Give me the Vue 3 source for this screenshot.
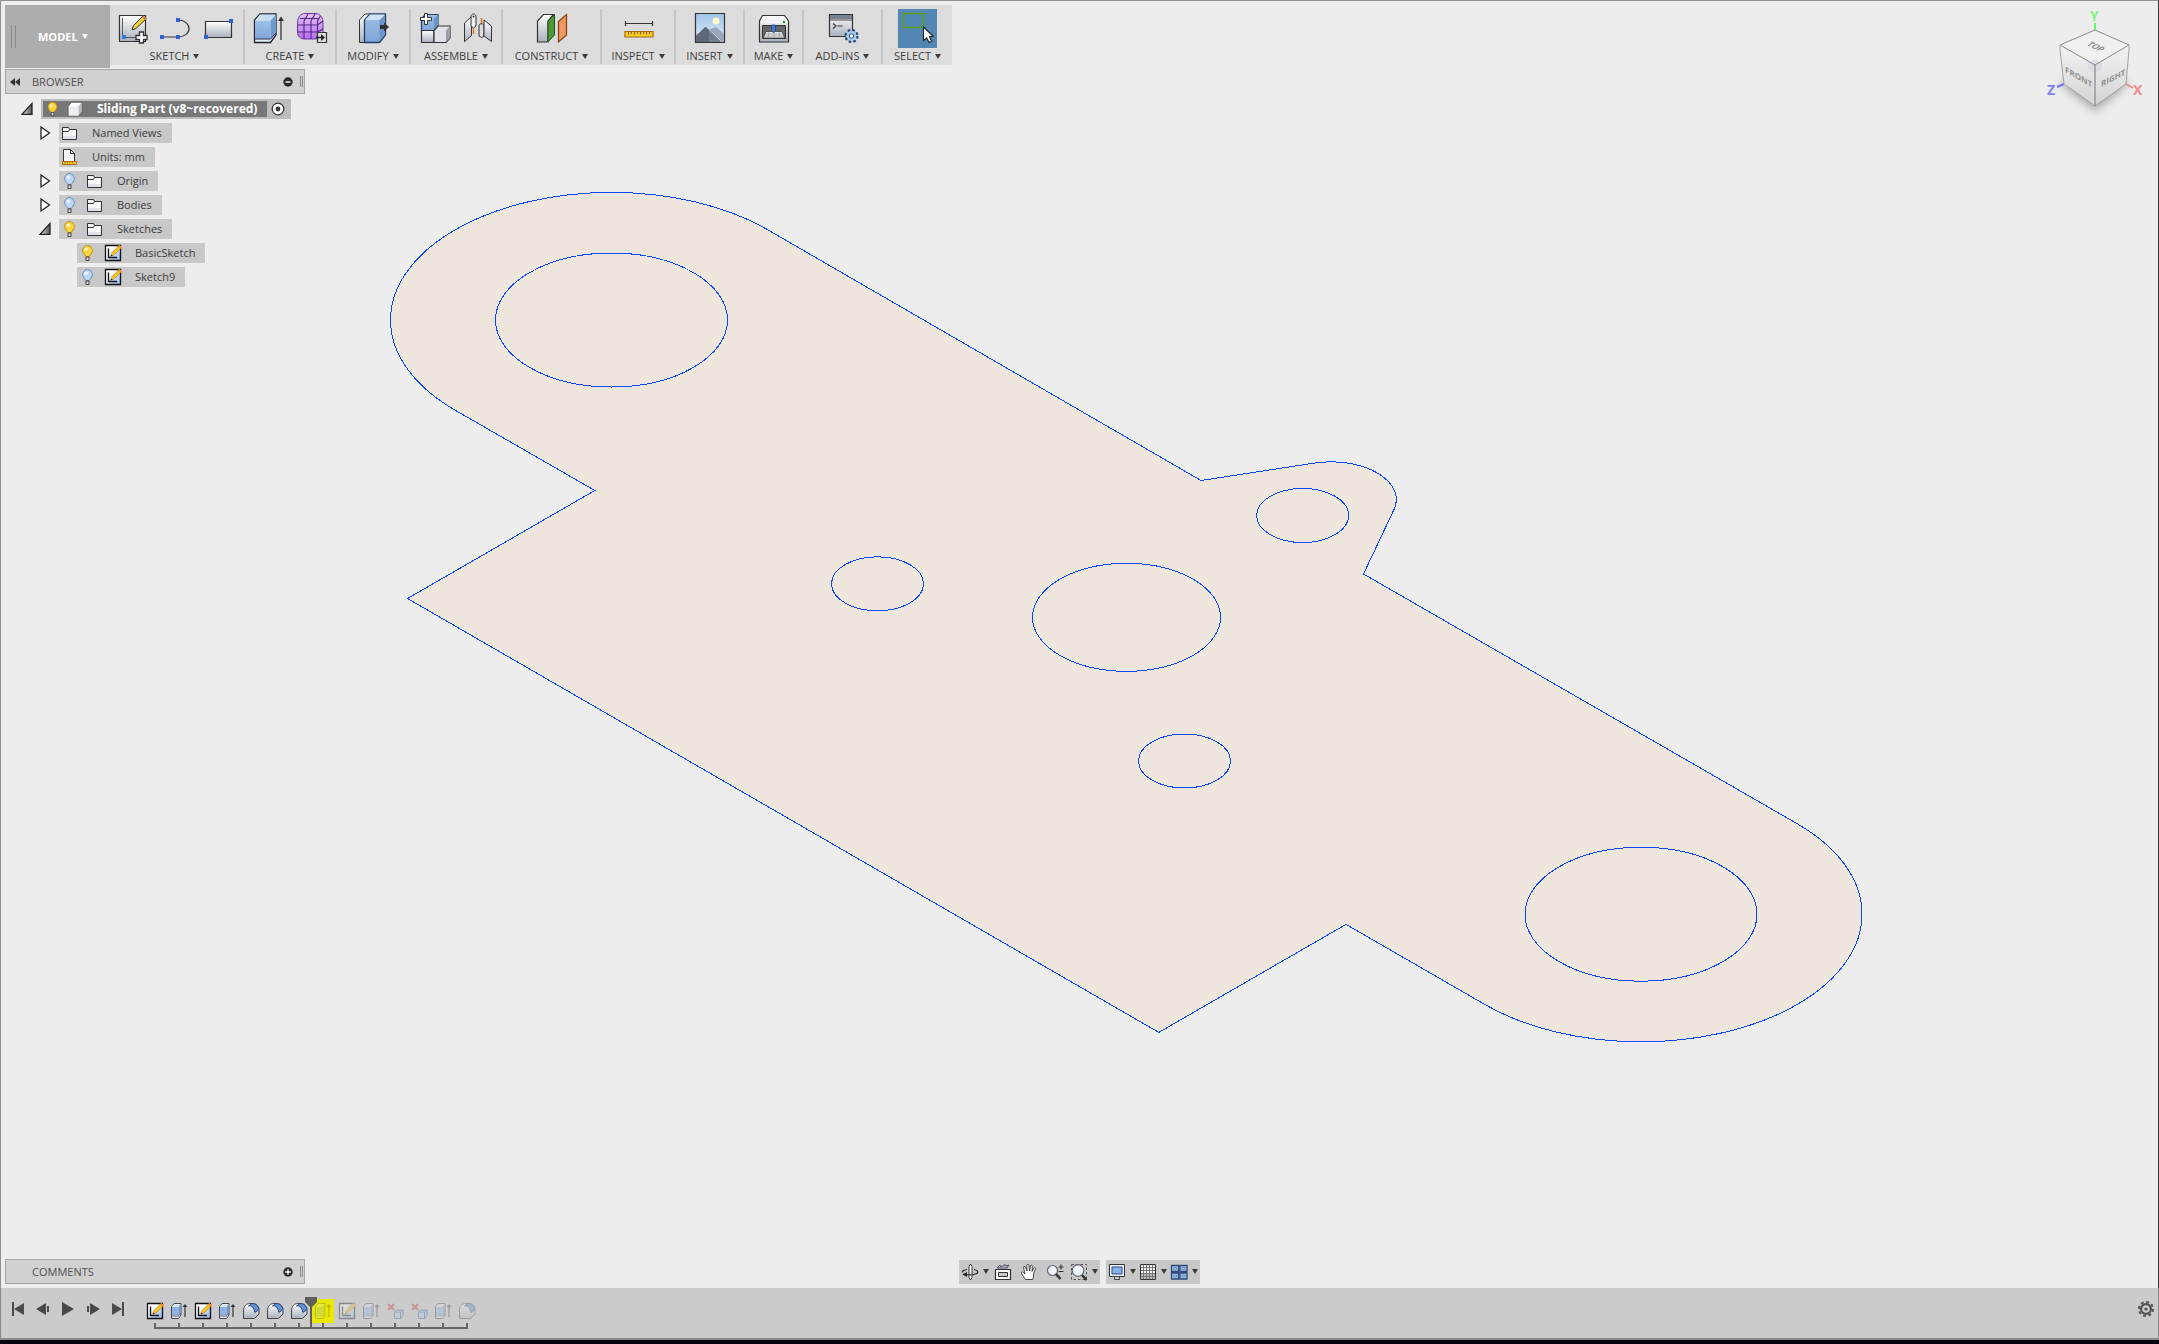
<template>
  <div class="app">
    <main class="viewport">
      <svg class="canvas" viewBox="1 1 2157 1287" aria-hidden="true">
        <defs>
          <linearGradient id="steel" x1="0" y1="0" x2="0" y2="1">
            <stop offset="0" stop-color="#ffffff" />
            <stop offset="1" stop-color="#a9b0bd" />
          </linearGradient>
          <linearGradient id="blue" x1="0" y1="0" x2="0" y2="1">
            <stop offset="0" stop-color="#9fc0e6" />
            <stop offset="1" stop-color="#7da6d6" />
          </linearGradient>
          <linearGradient id="purple" x1="0" y1="0" x2="0" y2="1">
            <stop offset="0" stop-color="#e3c4fb" />
            <stop offset="1" stop-color="#b56cf0" />
          </linearGradient>
          <linearGradient id="paper" x1="0" y1="0" x2="1" y2="1">
            <stop offset="0.3" stop-color="#ffffff" />
            <stop offset="1" stop-color="#7fa9e6" />
          </linearGradient>
          <linearGradient id="sky" x1="0" y1="0" x2="0" y2="1">
            <stop offset="0" stop-color="#9fc3ea" />
            <stop offset="1" stop-color="#e4eef8" />
          </linearGradient>
          <linearGradient id="dark" x1="0" y1="0" x2="1" y2="0">
            <stop offset="0" stop-color="#eeeeee" />
            <stop offset="1" stop-color="#555555" />
          </linearGradient>
        </defs>
        <g class="sketch">
          <path :d="outline" />
          <ellipse v-for="(h, i) in holes" :key="i" :cx="h[0]" :cy="h[1]" :rx="h[2]" :ry="h[3]" />
        </g>
      </svg>

      <nav class="toolbar">
        <button class="workspace" type="button">
          <span class="grip"></span>
          MODEL
          <svg class="caret" viewBox="0 0 6 5"><path d="M0 0h6L3 5z" /></svg>
        </button>
        <div v-for="g in groups" :key="g.label" class="group">
          <div class="group-icons">
            <button v-for="icon in g.icons" :key="icon" type="button" class="tool" :class="{ active: icon === 'select' }" :aria-label="icon">
              <svg viewBox="0 0 32 32" v-html="icons[icon]"></svg>
            </button>
          </div>
          <button type="button" class="group-label">
            {{ g.label }}<svg class="caret" viewBox="0 0 6 5"><path d="M0 0h6L3 5z" /></svg>
          </button>
        </div>
      </nav>

      <section class="browser">
        <header class="panel-head">
          <button type="button" class="collapse" aria-label="Collapse">
            <svg viewBox="0 0 10 8"><path d="M5 0v8L0 4zM10 0v8L5 4z" fill="#333" /></svg>
          </button>
          <h2>BROWSER</h2>
          <button type="button" class="toggle" aria-label="Hide">
            <svg viewBox="0 0 10 10"><circle cx="5" cy="5" r="4.7" fill="#2b2b2b" /><path d="M2.5 5h5" stroke="#fff" stroke-width="1.4" /></svg>
          </button>
          <span class="grip small"></span>
        </header>
        <ul class="tree">
          <li v-for="row in tree" :key="row.label" class="row" :class="['level' + row.level, { root: row.level === 0 }]">
            <button v-if="row.arrow" type="button" class="arrow" :aria-label="row.arrow">
              <svg viewBox="0 0 12 14" v-html="icons[row.arrow]"></svg>
            </button>
            <span v-else class="arrow"></span>
            <div class="node">
              <div class="node-body">
                <svg v-for="icon in row.icons" :key="icon" class="node-icon" viewBox="0 0 20 20" v-html="icons[icon]"></svg>
                <span class="node-text">{{ row.label }}</span>
              </div>
              <svg v-if="row.level === 0" class="radio" viewBox="0 0 14 14">
                <circle cx="7" cy="7" r="5.8" fill="#fff" stroke="#333" stroke-width="1.2" />
                <circle cx="7" cy="7" r="2.4" fill="#333" />
              </svg>
            </div>
          </li>
        </ul>
      </section>

      <div class="bottom">
        <header class="panel-head">
          <span class="collapse"></span>
          <h2>COMMENTS</h2>
          <button type="button" class="toggle" aria-label="Show comments">
            <svg viewBox="0 0 10 10"><circle cx="5" cy="5" r="4.7" fill="#2b2b2b" /><path d="M2.3 5h5.4M5 2.3v5.4" stroke="#fff" stroke-width="1.3" /></svg>
          </button>
          <span class="grip small"></span>
        </header>
        <div class="nav-bar">
          <div v-for="(set, i) in navSets" :key="i" class="nav-set">
            <button v-for="n in set" :key="n.icon" type="button" :class="{ menu: n.menu }" :aria-label="n.icon">
              <svg class="nav-icon" viewBox="0 0 18 18" v-html="icons[n.icon]"></svg>
              <svg v-if="n.menu" class="caret" viewBox="0 0 6 5"><path d="M0 0h6L3 5z" /></svg>
            </button>
          </div>
        </div>
      </div>

      <svg class="cube" viewBox="-1 0 129 120">
        <defs>
          <filter id="soft" x="-50%" y="-50%" width="200%" height="200%"><feGaussianBlur stdDeviation="5" /></filter>
          <linearGradient id="face" x1="0" y1="0" x2="0" y2="1">
            <stop offset="0" stop-color="#f2f2f2" />
            <stop offset="1" stop-color="#d4d4d4" />
          </linearGradient>
        </defs>
        <path d="M30 82L65 68L99 82L65 110z" fill="#8a8a8a" opacity="0.75" filter="url(#soft)" />
        <path d="M34 83l-7 3" stroke="#7272f0" stroke-width="2" />
        <path d="M96 83l7 4" stroke="#f58b8b" stroke-width="2" />
        <path d="M65 29v-7" stroke="#6cf56c" stroke-width="2" />
        <path d="M30 44L65 64V105L34 83z" fill="url(#face)" />
        <path d="M99 44L65 64V105L96 83z" fill="url(#face)" />
        <path d="M65 29L99 44L65 64L30 44z" fill="#f0f0f0" />
        <path d="M65 58l7 4v6l-7 4l-7-4v-6z" fill="#c3cbe0" opacity="0.4" />
        <g fill="none" stroke="#8c8c8c" stroke-width="1">
          <path d="M65 29L99 44L65 64L30 44z" />
          <path d="M30 44v5l4 34L65 105L96 83l3-34v-5" stroke="#a2a2a2" />
          <path d="M65 64v41" stroke="#777" />
        </g>
        <g class="face-text">
          <text transform="translate(35 71) skewY(30)">FRONT</text>
          <text transform="translate(71 86) skewY(-27)">RIGHT</text>
          <text transform="translate(56 44) rotate(26) skewX(-30)">TOP</text>
        </g>
        <text class="axis" x="60" y="20" fill="#7df57d">Y</text>
        <text class="axis" x="17" y="94" fill="#8080f5">Z</text>
        <text class="axis" x="103" y="94" fill="#f58b8b">X</text>
      </svg>
    </main>

    <footer class="timeline">
      <div class="player">
        <button v-for="p in player" :key="p" type="button" :aria-label="p">
          <svg viewBox="0 0 14 14" v-html="icons[p]"></svg>
        </button>
      </div>
      <ol class="features">
        <li v-for="(f, i) in features" :key="i" :class="{ rolled: i > 6, current: i === 7 }">
          <svg class="feature" viewBox="0 0 18 18" v-html="icons[f]"></svg>
        </li>
        <li class="marker-slot">
          <svg class="marker" viewBox="0 0 12 32"><path d="M0 0h12v5L7 10v22H5V10L0 5z" fill="#5f5f5f" /></svg>
        </li>
      </ol>
      <button type="button" class="settings" aria-label="Settings">
        <svg viewBox="0 0 16 16">
          <circle cx="8" cy="8" r="7" fill="none" stroke="#505050" stroke-width="2" stroke-dasharray="2.9 2.6" />
          <circle cx="8" cy="8" r="4.9" fill="none" stroke="#505050" stroke-width="2.2" />
          <circle cx="8" cy="8" r="1.6" fill="#505050" />
        </svg>
      </button>
    </footer>
  </div>
</template>

<script setup>
// plate outline, arcs are circles seen in isometric view
const outline =
  'M767.8 229.8L1201 480.5L1315 463A65.2 37.8 0 0 1 1393.3 511L1363.5 574L1797.3 823.8' +
  'A221 127.6 0 0 1 1862 914.2A221 127.6 0 0 1 1641 1041.8A221 127.6 0 0 1 1484.7 1004.4' +
  'L1346 924.4L1158.8 1032.4L407.5 598.5L594.8 490.5L455.2 410.2' +
  'A221 127.6 0 0 1 390.5 320A221 127.6 0 0 1 611.5 192.4A221 127.6 0 0 1 767.8 229.8z'

const holes = [
  [611.5, 320, 116, 67],
  [1641, 914.2, 116, 67],
  [1126.5, 617.3, 94, 54],
  [1302.7, 515.5, 46, 27],
  [1184.5, 761, 46, 27],
  [877.5, 583.8, 46, 27]
]

const groups = [
  { label: 'SKETCH', icons: ['sketch', 'line', 'rect'] },
  { label: 'CREATE', icons: ['extrude', 'form'] },
  { label: 'MODIFY', icons: ['press'] },
  { label: 'ASSEMBLE', icons: ['component', 'joint'] },
  { label: 'CONSTRUCT', icons: ['plane'] },
  { label: 'INSPECT', icons: ['measure'] },
  { label: 'INSERT', icons: ['picture'] },
  { label: 'MAKE', icons: ['printer'] },
  { label: 'ADD-INS', icons: ['script'] },
  { label: 'SELECT', icons: ['select'] }
]

const tree = [
  { label: 'Sliding Part (v8~recovered)', level: 0, arrow: 'open', icons: ['bulbOn', 'body'] },
  { label: 'Named Views', level: 1, arrow: 'closed', icons: ['folder'] },
  { label: 'Units: mm', level: 1, icons: ['units'] },
  { label: 'Origin', level: 1, arrow: 'closed', icons: ['bulbOff', 'folder'] },
  { label: 'Bodies', level: 1, arrow: 'closed', icons: ['bulbOff', 'folder'] },
  { label: 'Sketches', level: 1, arrow: 'open', icons: ['bulbOn', 'folder'] },
  { label: 'BasicSketch', level: 2, icons: ['bulbOn', 'sketchItem'] },
  { label: 'Sketch9', level: 2, icons: ['bulbOff', 'sketchItem'] }
]

const navSets = [
  [{ icon: 'orbit', menu: true }, { icon: 'look' }, { icon: 'pan' }, { icon: 'zoom' }, { icon: 'fit', menu: true }],
  [{ icon: 'display', menu: true }, { icon: 'grid', menu: true }, { icon: 'views', menu: true }]
]

const player = ['first', 'prev', 'play', 'next', 'last']

const features = [
  'fSketch', 'fExtrude', 'fSketch', 'fExtrude', 'fFillet', 'fFillet', 'fFillet',
  'fExtrude', 'fSketch', 'fExtrude', 'fRemove', 'fRemove', 'fExtrude', 'fFillet'
]

const dot = (x, y) => `<path d="M${x - 2} ${y - 2}h4v4h-4z" fill="#2f63cf"/>`

const bulb = (fill, edge) =>
  `<path d="M10.500 2.500a5 5 0 0 0-3.400 8.600C8.200 12.200 8.500 13 8.500 13.500h4c0-.5.3-1.300 1.400-2.400A5 5 0 0 0 10.500 2.500z" fill="${fill}" stroke="${edge}"/>` +
  '<path d="M9 14h3v3.500H9z" fill="#ddd" stroke="#444"/><circle cx="9.200" cy="6.300" r="1.700" fill="#fff" opacity=".8"/>'

const sketchSmall =
  '<path d="M1.500 1.500h15v15h-15z" fill="url(#paper)" stroke="#111" stroke-width="1.300"/>' +
  '<path d="M4.500 4.500v9H13" fill="none" stroke="#111" stroke-width="1.300"/>' +
  '<path d="M7 12l1-3.200L15 1.500l2.300 2L10 11z" fill="#f7c21a" stroke="#b9861a" stroke-width=".6"/>' +
  '<path d="M14 2.500l1.500-1.500 2.300 2-1.600 1.700z" fill="#f19327"/><path d="M6.500 12.500l1-2 1.200 1.200z" fill="#222"/>'

const icons = {
  sketch:
    '<path d="M3.500 3.500h26v26h-26z" fill="url(#steel)" stroke="#333" stroke-width="1.200"/>' +
    '<path d="M6.500 6v18M10 25.500h14" stroke="#555"/><path d="M6 23h4v4h-4z" fill="#2f7fd6"/>' +
    '<path d="M16 18l1.500-4.500L27 4l3 3L20 16.500z" fill="#f8cf3a" stroke="#333"/><path d="M26 5l1.500-1.500 3 3L29 8z" fill="#c9853c"/>' +
    '<path d="M23.500 20h4v3.500H31v4h-3.500V31h-4v-3.500H20v-4h3.500z" fill="#fff" stroke="#333" stroke-width="1.300"/>',
  line:
    '<path d="M3 25h16c6 0 11-3.500 11-8.500S25 8 19 8" fill="none" stroke="#333" stroke-width="1.200"/>' + dot(3, 25) + dot(19, 25) + dot(19, 8),
  rect:
    '<path d="M3.500 9.500h26v16h-26z" fill="url(#steel)" stroke="#333" stroke-width="1.200"/>' + dot(4, 25) + dot(29, 9),
  extrude:
    '<path d="M1.500 8L7 2h16v21l-5.500 7.500h-16z" fill="#e4ecf6" stroke="#223" stroke-width="1.300"/>' +
    '<path d="M2 8.500h15.500V27H2z" fill="url(#blue)"/><path d="M17.500 8.500L23 2.500V21l-5.500 6z" fill="#6f98cc"/><path d="M2 8.500L7 2.500h15.500l-5 6z" fill="#c9def3"/>' +
    '<path d="M2 27h15.500L23 21" fill="none" stroke="#335"/><path d="M28 28V6" stroke="#333" stroke-width="1.300"/><path d="M25 9l3-4.500L31 9z" fill="#333"/>',
  form:
    '<path d="M1.500 12C1.500 4 5 1.500 9 1.500h10c6 0 8 5 8 9V20c0 5-4 7-9 7H9c-5 0-7.500-3-7.500-7z" fill="url(#purple)" stroke="#6a3a9a"/>' +
    '<path d="M1.500 13h20l5.500-4M1.500 20h20l5.500-3M4 6.500h19M8 27V9l4-7M15 27V9l4-7M21.500 26V9l3-5" fill="none" stroke="#53257f" stroke-width="1.100"/>' +
    '<path d="M21.500 20.500h9v10h-9z" fill="#ddd" stroke="#333" stroke-width="1.200"/><path d="M20 25.500h6" stroke="#222" stroke-width="1.600"/><path d="M25 22l4 3.500-4 3.500z" fill="#222"/>',
  press:
    '<path d="M1.500 8L7 2h5L7.500 8v22.500h-6z" fill="url(#steel)" stroke="#333"/>' +
    '<path d="M6.500 8L12 2h15.500v21l-6 7.500h-15z" fill="url(#blue)" stroke="#223c66" stroke-width="1.300"/>' +
    '<path d="M7 8l5-5.500h15L21.500 8z" fill="#cfe2f6"/><path d="M21.500 8.500L27 3v19.500l-5.500 7z" fill="#6d97cc"/>' +
    '<path d="M22 13h4V10.500l5 4.500-5 4.500V17h-4z" fill="#333"/>',
  component:
    '<path d="M2.500 7L6 2.500h13V15l-2 3.500H2.500z" fill="url(#blue)" stroke="#223c66" stroke-width="1.200"/><path d="M15 6.500l4-4v12l-4 3.500z" fill="#6d97cc"/>' +
    '<path d="M2.500 18.500h12.500v12H2.500z" fill="url(#steel)" stroke="#333" stroke-width="1.200"/><path d="M15 18.500l4-4.500h12v12l-4 4.500H15z" fill="#dfe2e8" stroke="#333" stroke-width="1.200"/>' +
    '<path d="M27 18.500V30l4-4V14z" fill="#9a9faa"/><path d="M5.500 1.500h3v4h4v3h-4v4h-3v-4h-4v-3h4z" fill="#fff" stroke="#333"/>',
  joint:
    '<path d="M2.500 11l7-6.500v19l-7 6z" fill="url(#steel)" stroke="#333"/><path d="M9 5c0-4 5-4 5 0v9l-2.500 2L9 14z" fill="#eee" stroke="#333"/><circle cx="11.500" cy="4.500" r="1" fill="#333"/>' +
    '<path d="M11.500 16v6M19.500 6v7" stroke="#e87516" stroke-width="1.500"/><path d="M17 14c0-3 5-3 5 0v10l-2.500 1.500L17 24z" fill="#ddd" stroke="#333"/><path d="M22 8l7.500 6v15.500L22 24z" fill="url(#steel)" stroke="#333"/>',
  plane:
    '<path d="M1.500 9L7.500 2.500h10L12 9v21H1.500z" fill="url(#steel)" stroke="#333" stroke-width="1.200"/><path d="M12 9l6.500-6.500V23L12 30z" fill="#4b9a35" stroke="#24501a"/>' +
    '<path d="M22.500 9.500l8-7V23l-8 7z" fill="#ee9a60" stroke="#8a3d10" stroke-width="1.200"/>',
  measure:
    '<path d="M2 11.500h28M2.500 9v5M29.500 9v5" stroke="#333" stroke-width="1.200"/><path d="M2 19.500h28v5.500H2z" fill="#f6cc28" stroke="#a86a12" stroke-width="1.200"/>' +
    '<path d="M5.500 20v2.500M8.500 20v2M11.500 20v2.500M14.500 20v2M17.500 20v2.500M20.500 20v2M23.500 20v2.500M26.500 20v2" stroke="#8a5a10"/>',
  picture:
    '<path d="M1.500 1.500h29v29h-29z" fill="url(#sky)" stroke="#333" stroke-width="1.200"/><circle cx="22" cy="9" r="3.500" fill="#fffbd0"/>' +
    '<path d="M2 22l15-5 5-2 8 7v8H2z" fill="#9aa7bd"/><path d="M2 24l9-9 3 1 14 14H2z" fill="#5f6878"/><path d="M15 17l14 13H15z" fill="#747e8f"/><path d="M13 15.500L28 30" stroke="#fff" stroke-width=".7"/>',
  printer:
    '<path d="M4.500 3.500h22l4 5.500v21h-29V9z" fill="url(#steel)" stroke="#333" stroke-width="1.200"/><path d="M3 10h26" stroke="#fff"/>' +
    '<circle cx="26" cy="10" r="1.200" fill="#1a9a1a"/><path d="M4.500 13.500h23v13h-23z" fill="#666" stroke="#333"/><path d="M8 19.500h16l2.500 6.500h-21z" fill="#e8e8e8" stroke="#333" stroke-width=".7"/>' +
    '<path d="M7 22h18M6 24h20M11 20l-1 6M16 20v6M21 20l1 6" stroke="#999" stroke-width=".7"/><path d="M13.500 13h4v5l-2 3-2-3z" fill="#3c7ad8" stroke="#1c3c80" stroke-width=".7"/>',
  script:
    '<path d="M2.500 2.500h23v22h-23z" fill="url(#steel)" stroke="#333" stroke-width="1.200"/><path d="M3 3h22v4H3z" fill="#77818f"/><path d="M3 8h22" stroke="#444"/>' +
    '<path d="M6 11.500l3 2.500-3 2.500M10.500 14h5" fill="none" stroke="#333" stroke-width="1.200"/>' +
    '<circle cx="24.500" cy="24" r="5.800" fill="#a9cbf0" stroke="#2c4a78" stroke-width="2.600" stroke-dasharray="2.600 1.960"/><circle cx="24.500" cy="24" r="4.900" fill="#a9cbf0"/><circle cx="24.500" cy="24" r="2.200" fill="#fff" stroke="#2c4a78"/>',
  select:
    '<path d="M1.500 1.500h20v14h-20z" fill="none" stroke="#5aa016" stroke-width="1.500"/>' +
    '<path d="M21.500 15v13.500l3.200-2.600 2.400 4.600 2.600-1.300-2.200-4.500 3.700-.4z" fill="#fff" stroke="#222" stroke-width="1.100"/>',
  open: '<path d="M11 1.500v10.800H1z" fill="url(#dark)" stroke="#222" stroke-width="1.300"/>',
  closed: '<path d="M2 1v12l8.500-6z" fill="#fff" stroke="#222" stroke-width="1.300"/>',
  bulbOn: bulb('#fbd63a', '#c98a12'),
  bulbOff: bulb('#bcd6f7', '#6e8cba'),
  body: '<path d="M2.500 7L6 2.500h11.500v10L14 17.500H2.500z" fill="#fff" stroke="#555"/><path d="M3 7h11v10.500H3z" fill="#eceef2"/><path d="M14 7l3.500-4.500v10L14 17z" fill="#b7bbc4"/>',
  folder: '<path d="M3.500 4.500h6l1 2h7v10h-14z" fill="#f6f7fa" stroke="#333"/><path d="M3.500 8.500h6l1-2" fill="none" stroke="#333"/><path d="M4 13h13v3H4z" fill="#dfe2e8"/>',
  units: '<path d="M4.500 2.500h7l4 4v9h-11z" fill="#f4f5f8" stroke="#333"/><path d="M11.500 2.500v4h4" fill="none" stroke="#333"/><path d="M3.500 14.500h14v3h-14z" fill="#f6cc28" stroke="#a86a12"/><path d="M6 15v1.500M8.500 15v1.500M11 15v1.500M13.500 15v1.500" stroke="#8a5a10" stroke-width=".8"/>',
  sketchItem: `<g transform="translate(2 1)">${sketchSmall}</g>`,
  orbit: '<path d="M8 3.500L9.500 1 11 3.500v11L9.500 17 8 14.500z" fill="#fff" stroke="#333"/><path d="M13 6.500c5 1 5 4 0 5-4 .8-8 .4-11-.5M6 6.500C3 7 1 8 1.500 9.500" fill="none" stroke="#333" stroke-width="1.200"/><path d="M6 9v5l-4.500-2.500z" fill="#222"/>',
  look: '<path d="M1.500 6.500h15v10h-15z" fill="#fff" stroke="#333" stroke-width="1.200"/><path d="M4.500 9.500h9v4h-9z" fill="#c8c8d2" stroke="#333"/><path d="M3 5l3-3 1 2 4-2.500 1 1.500 3-1-2 3z" fill="#aab4bf" stroke="#556"/>',
  pan: '<path d="M5.500 16.500L1.500 10.500c-.8-1.500 1-2 2-1L5 11 3.500 4.500c-.2-1.300 1.500-1.600 1.900-.3L7 8 6.800 2.500c0-1.500 2-1.500 2.200 0L9.500 8l1-5c.3-1.400 2.100-1 1.900.4L12 8.500l1.800-3.300c.7-1.200 2.200-.4 1.700.8L13.500 11v3l-1 2.500z" fill="#fff" stroke="#333" stroke-width=".9"/>',
  zoom: '<circle cx="6.500" cy="7.500" r="5" fill="#eef6fc" stroke="#667" stroke-width="1.200"/><path d="M10 11l4.500 5" stroke="#333" stroke-width="2.600"/><path d="M12.500 4h5M15 1.500v5M12.500 8.500h5" stroke="#333" stroke-width="1.200"/>',
  fit: '<path d="M1.500 1.500h15v15h-15z" fill="none" stroke="#555" stroke-dasharray="2.500 2"/><circle cx="8" cy="7.500" r="5.800" fill="#eef6fc" stroke="#667" stroke-width="1.200"/><path d="M12 12l4.500 5" stroke="#333" stroke-width="2.600"/>',
  display: '<path d="M1.500 1.500h15v12h-15z" fill="#eef2f8" stroke="#333"/><path d="M4 4h10v7H4z" fill="#86b2e8" stroke="#2c4a88"/><path d="M6.500 13.500h5v3h-5z" fill="#ccc" stroke="#444"/>',
  grid: '<path d="M1.500 1.500h15v15h-15z" fill="#f4f4f4" stroke="#333"/><path d="M2 10h14v6H2z" fill="#bcbcbc"/><path d="M4.500 2v14M7.500 2v14M10.500 2v14M13.500 2v14M2 4.500h14M2 7.500h14M2 10.500h14M2 13.500h14" stroke="#777"/>',
  views: '<g fill="#a6c6ec" stroke="#2c4a78" stroke-width="1.300"><path d="M1.500 2.500h7v6h-7zM10 2.500h7v6h-7zM1.500 10h7v6h-7zM10 10h7v6h-7z"/></g><path d="M3.500 4.500h3v2h-3zM12 4.500h3v2h-3zM3.500 12h3v2h-3zM12 12h3v2h-3z" fill="none" stroke="#5f88bd" stroke-width=".8"/>',
  first: '<path d="M1 0h2v14H1zM13 1v12L3 7z" fill="#4a4a4a"/>',
  prev: '<path d="M10 1v12L0 7zM11 4h2v6h-2z" fill="#4a4a4a"/>',
  play: '<path d="M1 0v14l12-7z" fill="#4a4a4a"/>',
  next: '<path d="M4 1v12l10-6zM1 4h2v6H1z" fill="#4a4a4a"/>',
  last: '<path d="M11 0h2v14h-2zM1 1v12l10-6z" fill="#4a4a4a"/>',
  fSketch: sketchSmall,
  fExtrude:
    '<path d="M1.500 4.500L4 1.500h7V13l-2.500 3.500h-7z" fill="#e2e9f3" stroke="#445"/><path d="M2 5h6.500v8.500H2z" fill="#8db4e2"/><path d="M8.500 5l2-3v9l-2 3z" fill="#6d97cc"/><path d="M2 14h6.500l2-2.500" fill="none" stroke="#556" stroke-width=".8"/>' +
    '<path d="M15 15V4" stroke="#333" stroke-width="1.200"/><path d="M12.500 5L15 2l2.500 3z" fill="#333"/>',
  fFillet:
    '<path d="M1.500 9c0-5 3-7.500 6-7.500h3c4 0 6.500 3 6.500 7V12l-4.500 4.500h-11z" fill="url(#steel)" stroke="#444"/>' +
    '<path d="M6.500 4c3-1 6 2 6.300 6.500l4.200-3C16.500 4 14 1.500 10 1.500z" fill="#5f93d6" stroke="#28477c"/>',
  fRemove:
    '<path d="M2 2l6 6M8 2L2 8" stroke="#c23030" stroke-width="2"/><path d="M8.500 10l2.500-2h6v6l-2.500 2.500h-6z" fill="#a9cbf0" stroke="#345f96"/><path d="M8.500 10h6v6.500M14.500 10L17 8" fill="none" stroke="#345f96"/>'
}
</script>

<style>
body {
  margin: 0;
  background: #06040f;
}
</style>

<style scoped>
.app {
  display: flex;
  flex-direction: column;
  box-sizing: border-box;
  height: 100vh;
  border-bottom: 4px solid #06040f;
  font-family: "Open Sans", "Noto Sans", sans-serif;
  font-size: 11px;
  color: #3c3c3c;
}
button {
  padding: 0;
  border: 0;
  background: none;
  color: inherit;
  font: inherit;
}
svg {
  display: block;
  flex: none;
}
h2, ul, ol {
  margin: 0;
  padding: 0;
  list-style: none;
}
.viewport {
  position: relative;
  display: flex;
  flex-direction: column;
  flex: 1;
  box-sizing: border-box;
  padding: 4px;
  border: 1px solid #909090;
  border-right-color: #333;
  border-bottom: 0;
  background: #ededed;
}
.canvas {
  position: absolute;
  inset: 0;
  width: 100%;
  height: 100%;
}
.sketch {
  fill: #eee6dc;
  stroke: #0a48ff;
  stroke-width: 1px;
  shape-rendering: crispEdges;
}
.toolbar,
.browser,
.bottom {
  position: relative;
}
.toolbar {
  display: grid;
  grid-template-columns: 105px 135px 92px 74px 92px 99px 74px 69px 59px 79px 69px;
  align-self: flex-start;
  height: 60px;
  background: #dcdcdc;
}
.workspace {
  display: flex;
  align-items: center;
  padding-left: 6px;
  background: #adadad;
  color: #fff;
  font-weight: bold;
}
.grip {
  width: 3px;
  height: 23px;
  margin-right: 22px;
  border: solid #8a8a8a;
  border-width: 0 1px;
}
.caret {
  width: 6px;
  height: 5px;
  margin-left: 4px;
  fill: currentColor;
}
.group {
  display: flex;
  flex-direction: column;
  align-items: center;
  margin: 4px 0;
  border-right: 2px solid #c6c6c6;
}
.group:nth-child(2) {
  padding-right: 4px;
}
.group:last-child {
  border-right: 0;
}
.group-icons {
  display: flex;
  gap: 4px;
}
.tool {
  padding: 3px 4px 4px;
  width: 39px;
  height: 39px;
}
.tool svg {
  width: 32px;
  height: 32px;
}
.tool.active {
  background: #5387b3;
}
.group-label {
  display: flex;
  align-items: center;
  height: 16px;
  line-height: 16px;
  white-space: nowrap;
}
.browser {
  margin-top: 4px;
  flex: 1;
}
.panel-head {
  display: flex;
  align-items: center;
  box-sizing: border-box;
  width: 300px;
  height: 25px;
  padding: 0 1px 0 4px;
  border: 1px solid #a6a6a6;
  background: #d1d1d1;
}
.panel-head h2 {
  flex: 1;
  font-size: 11px;
  font-weight: normal;
  color: #505050;
}
.collapse {
  width: 22px;
}
.collapse svg {
  width: 10px;
  height: 8px;
}
.toggle svg {
  width: 10px;
  height: 10px;
}
.grip.small {
  width: 1px;
  height: 11px;
  margin: 0 0 0 7px;
}
.tree {
  display: flex;
  flex-direction: column;
  gap: 4px;
  margin-top: 5px;
}
.row {
  display: flex;
  align-items: center;
  height: 20px;
}
.level0 {
  padding-left: 13px;
}
.level1 {
  padding-left: 31px;
}
.level2 {
  padding-left: 49px;
}
.arrow {
  width: 18px;
  margin-right: 5px;
}
.arrow svg {
  width: 12px;
  height: 14px;
  margin: 0 auto;
}
.node {
  display: flex;
  align-items: center;
  height: 20px;
  background: #c8c8c8;
}
.node-body {
  display: flex;
  align-items: center;
  gap: 5px;
  padding-right: 10px;
}
.node-icon {
  width: 20px;
  height: 20px;
}
.node-text {
  padding-left: 8px;
  line-height: 20px;
  white-space: nowrap;
}
.root .node {
  background: #bdbdbd;
}
.root .node-body {
  height: 16px;
  margin-left: 2px;
  background: #777;
  color: #fff;
  font-size: 12px;
  font-weight: bold;
}
.root .node-icon {
  width: 18px;
  height: 18px;
}
.radio {
  width: 14px;
  height: 14px;
  margin: 0 6px 0 4px;
}
.bottom {
  display: grid;
  grid-template-columns: 1fr auto 1fr;
  align-items: center;
}
.nav-bar {
  display: flex;
  gap: 6px;
}
.nav-set {
  display: flex;
  height: 24px;
  padding: 0 1px 0 0;
  background: #c8c8c8;
}
.nav-set button {
  display: flex;
  align-items: center;
  padding: 0 4px;
}
.nav-set .menu {
  padding: 0 1px 0 2px;
}
.nav-icon {
  width: 18px;
  height: 18px;
}
.cube {
  position: absolute;
  top: 0;
  right: 0;
  width: 129px;
  height: 120px;
}
.face-text {
  fill: #8e8e8e;
  font-size: 8px;
  font-weight: bold;
}
.axis {
  font-size: 14px;
  font-weight: bold;
}
.timeline {
  display: flex;
  align-items: center;
  box-sizing: border-box;
  height: 52px;
  padding: 0 4px 8px 10px;
  border: solid #8a8a8a;
  border-width: 0 1px 2px;
  background: #cbcbcb;
}
.player {
  display: flex;
  gap: 11px;
}
.player svg {
  width: 14px;
  height: 14px;
}
.features {
  position: relative;
  display: flex;
  height: 30px;
  margin: 10px auto 0 18px;
}
.features li {
  position: relative;
  display: flex;
  justify-content: center;
  width: 24px;
}
/* base line with a tick under each feature */
.features li::before {
  content: "";
  position: absolute;
  bottom: 0;
  left: 0;
  width: 24px;
  height: 2px;
  background: #666;
}
.features li:first-child::before {
  left: 11px;
  width: 13px;
}
.features li:nth-child(14)::before {
  width: 13px;
}
.features li::after {
  content: "";
  position: absolute;
  bottom: 0;
  left: 11px;
  width: 2px;
  height: 6px;
  background: #666;
}
.features .marker-slot {
  position: absolute;
  top: -2px;
  left: 162px;
  width: 12px;
}
.features .marker-slot::before,
.features .marker-slot::after {
  display: none;
}
.marker {
  width: 12px;
  height: 32px;
}
.feature {
  width: 18px;
  height: 18px;
  padding: 3px 2px;
}
.rolled .feature {
  opacity: 0.35;
}
.features .current {
  background: linear-gradient(#e8e800, #e8e800) no-repeat 1px 0 / 22px 24px;
}
.current .feature {
  opacity: 0.25;
}
.settings svg {
  width: 16px;
  height: 16px;
}
</style>
